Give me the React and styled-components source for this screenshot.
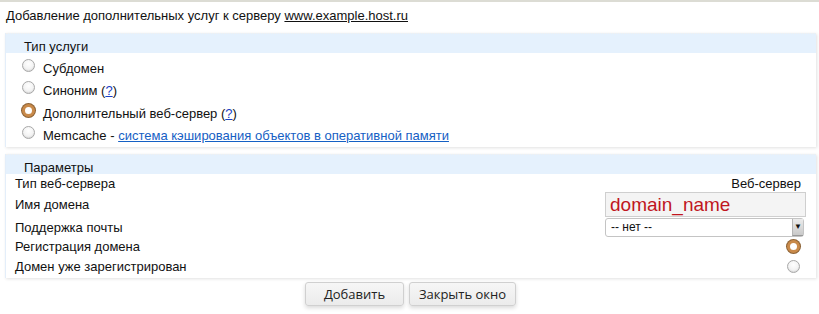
import React from "react"
import styled, { createGlobalStyle } from "styled-components"

const Global = createGlobalStyle`
  html, body {
    margin: 0;
    padding: 0;
    background: #fff;
  }
  body {
    font-family: "Liberation Sans", Arial, sans-serif;
    font-size: 13px;
    color: #111;
  }
`

const Page = styled.div`
  width: 819px;
  height: 314px;
  box-sizing: border-box;
  border-top: 2px solid #dcdcd4;
  display: flex;
  flex-direction: column;
`

const Title = styled.div`
  padding: 6px 0 0 6px;
  height: 25px;
  box-sizing: border-box;
  line-height: 16px;
`

const Host = styled.a`
  color: #111;
  text-decoration: underline;
`

const Panel = styled.div`
  margin: ${props => props.top}px 3px 0 5px;
  background: #fff;
  border-left: 1px solid #e3eefa;
  box-shadow: 1px 1px 3px rgba(0, 0, 0, 0.12);
  display: flex;
  flex-direction: column;
`

const PanelHead = styled.div`
  background: #e5f1fd;
  height: 19px;
  padding-left: 18px;
  line-height: 25px;
  border-top: 1px dotted #f0f0f0;
`

const PanelBody = styled.div`
  display: flex;
  flex-direction: column;
  padding: ${props => props.pad};
`

const RadioRow = styled.label`
  display: flex;
  align-items: center;
  height: 22.5px;
  padding-left: 16px;
  gap: 8px;
`

const Radio = styled.span`
  width: 13px;
  height: 13px;
  box-sizing: border-box;
  border-radius: 50%;
  flex: none;
  position: relative;
  top: ${props => props.shift || 0}px;
  border: ${props => (props.checked ? "3px solid #c98a4a" : "1px solid #a8a8a8")};
  background: ${props =>
    props.checked
      ? "#fff"
      : "radial-gradient(circle at 50% 35%, #fff 0%, #f3f3f3 55%, #dadada 100%)"};
  box-shadow: ${props =>
    props.checked ? "0 0 0 1px #8c6235" : "inset 0 -1px 1px rgba(0,0,0,0.05)"};
`

const Help = styled.a`
  color: #1a3fc4;
  text-decoration: underline;
`

const InfoLink = styled.a`
  color: #1560c4;
  text-decoration: underline;
`

const ParamRow = styled.div`
  display: flex;
  align-items: center;
  justify-content: space-between;
  height: ${props => props.h}px;
  padding: 0 ${props => props.right}px 0 9px;
`

const DomainInput = styled.input`
  width: 201px;
  height: 25px;
  box-sizing: border-box;
  background: #f4f4f4;
  border: 1px solid #cfcfcf;
  color: #c0161e;
  font-family: "Liberation Sans", Arial, sans-serif;
  font-size: 19px;
  padding: 0 4px;
  outline: none;
`

const SelectBox = styled.div`
  width: 199px;
  height: 19px;
  box-sizing: border-box;
  border: 1px solid #c4c4c4;
  border-radius: 3px;
  background: #fff;
  display: flex;
  align-items: center;
  justify-content: space-between;
  padding-left: 5px;
  font-size: 12px;
  margin-right: 2px;
`

const SelectArrow = styled.span`
  width: 11px;
  height: 17px;
  background: linear-gradient(#ececec, #c9c9c9);
  border-left: 1px solid #b5b5b5;
  border-bottom: 1px solid #999;
  box-sizing: border-box;
  display: flex;
  align-items: center;
  justify-content: center;
  font-size: 8px;
  color: #111;
`

const Buttons = styled.div`
  display: flex;
  justify-content: center;
  gap: 5px;
  margin-top: 4px;
  padding-left: 2px;
`

const Button = styled.button`
  height: 24px;
  width: ${props => props.w}px;
  font-family: "Open Sans", "Noto Sans", sans-serif;
  font-size: 13px;
  color: #222;
  background: linear-gradient(#f6f6f6, #ebebeb);
  border: 1px solid #d0d0d0;
  border-radius: 3px;
  box-shadow: 0 2px 4px rgba(0, 0, 0, 0.15);
  padding: 0;
`

const services = [
  { key: "sub", label: "Субдомен" },
  { key: "syn", label: "Синоним", help: true },
  { key: "web", label: "Дополнительный веб-сервер", help: true, checked: true },
  {
    key: "mem",
    label: "Memcache - ",
    link: "система кэширования объектов в оперативной памяти",
  },
]

export default function App() {
  return (
    <>
      <Global />
      <Page>
        <Title>
          Добавление дополнительных услуг к серверу <Host>www.example.host.ru</Host>
        </Title>
        <Panel top={6}>
          <PanelHead>Тип услуги</PanelHead>
          <PanelBody pad="4px 0 0 0">
            {services.map(s => (
              <RadioRow key={s.key}>
                <Radio checked={s.checked} shift={-3} />
                <span>
                  {s.label}
                  {s.help && (
                    <>
                      {" "}(<Help>?</Help>)
                    </>
                  )}
                  {s.link && <InfoLink>{s.link}</InfoLink>}
                </span>
              </RadioRow>
            ))}
          </PanelBody>
        </Panel>
        <Panel top={7}>
          <PanelHead>Параметры</PanelHead>
          <PanelBody pad="0 0 1px 0">
            <ParamRow h={18} right={15}>
              <span>Тип веб-сервера</span>
              <span>Веб-сервер</span>
            </ParamRow>
            <ParamRow h={25} right={10}>
              <span>Имя домена</span>
              <DomainInput defaultValue="domain_name" />
            </ParamRow>
            <ParamRow h={20} right={10}>
              <span>Поддержка почты</span>
              <SelectBox>
                -- нет --
                <SelectArrow>▼</SelectArrow>
              </SelectBox>
            </ParamRow>
            <ParamRow h={19} right={16}>
              <span>Регистрация домена</span>
              <Radio checked />
            </ParamRow>
            <ParamRow h={21} right={16}>
              <span>Домен уже зарегистрирован</span>
              <Radio />
            </ParamRow>
          </PanelBody>
        </Panel>
        <Buttons>
          <Button w={99}>Добавить</Button>
          <Button w={107}>Закрыть окно</Button>
        </Buttons>
      </Page>
    </>
  )
}
